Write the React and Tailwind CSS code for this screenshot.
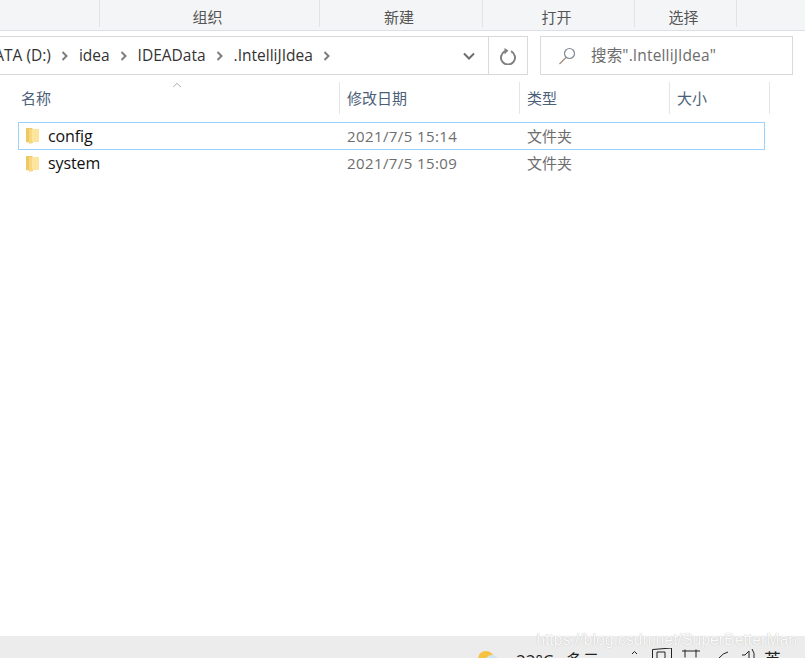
import { ChevronUp } from 'lucide-react';

const font = { fontFamily: '"Open Sans", "Noto Sans CJK SC", sans-serif' };

const tabs = [
  { label: '组织', width: 'w-[220px]' },
  { label: '新建', width: 'w-[163px]' },
  { label: '打开', width: 'w-[152px]' },
  { label: '选择', width: 'w-[102px]' },
];

const columns = [
  { label: '名称', width: 'w-[340px]', pad: 'pl-[21px]' },
  { label: '修改日期', width: 'w-[180px]', pad: 'pl-[7px]' },
  { label: '类型', width: 'w-[150px]', pad: 'pl-[7px]' },
  { label: '大小', width: 'w-[100px]', pad: 'pl-[7px]' },
];

const files = [
  { name: 'config', date: '2021/7/5 15:14', selected: true },
  { name: 'system', date: '2021/7/5 15:09', selected: false },
];

const crumbs = ['DATA (D:)', 'idea', 'IDEAData', '.IntelliJIdea'];

const Chevron = () => (
  <svg width="8" height="12" viewBox="0 0 8 12" fill="none" stroke="#7d7d7d" strokeWidth="2" className="mx-[10px] shrink-0">
    <path d="M1.5 2l4 4-4 4" />
  </svg>
);

const FolderIcon = () => (
  <svg width="13" height="17" viewBox="0 0 13 17" className="shrink-0">
    <path d="M0 1h6l1 1v14l-7-1z" fill="#eec766" />
    <path d="M3 2h10v13H6l-3 1.500z" fill="#fde59d" />
    <path d="M3 2h3v14.500l-3-0z" fill="#f8d77f" />
  </svg>
);

const SearchIcon = () => (
  <svg width="18" height="18" viewBox="0 0 18 18" fill="none" strokeWidth="1.200" className="shrink-0">
    <circle cx="11.500" cy="6.500" r="5" stroke="#7f8a94" />
    <path d="M8 10.500l-6.500 6.500" stroke="#a08c78" />
  </svg>
);

const RefreshIcon = () => (
  <svg width="18" height="18" viewBox="0 0 18 18" fill="none" className="shrink-0">
    <path d="M6 4.200a7 7 0 1 0 6 0" stroke="#808080" strokeWidth="2" />
    <path d="M5.500 1v6.500l4-4z" fill="#808080" />
  </svg>
);

export default function App() {
  return (
    <div className="relative flex flex-col w-[805px] h-[658px] overflow-hidden bg-white" style={font}>
      {/* Ribbon tabs */}
      <div className="flex h-[31px] shrink-0 bg-[#f4f5f7] border-b border-[#dcdfe3] pl-[99px]">
        {tabs.map((tab) => (
          <div
            key={tab.label}
            className={`${tab.width} h-[27px] border-l border-[#e2e3e5] flex items-center justify-center pt-[8px] pr-[4px] text-[15px] text-[#555]`}
          >
            {tab.label}
          </div>
        ))}
        <div className="h-[27px] border-l border-[#e2e3e5]" />
      </div>

      {/* Address and search */}
      <div className="flex h-[39px] shrink-0 mt-[5px]">
        <div className="flex items-center w-[550px] ml-[-22px] shrink-0 border border-[#d9d9d9] text-[15.5px] text-[#333]">
          <div className="flex items-center flex-1 pl-[4px] whitespace-nowrap">
            {crumbs.map((crumb) => (
              <div key={crumb} className="flex items-center">
                <span>{crumb}</span>
                <Chevron />
              </div>
            ))}
          </div>
          <div className="flex items-center justify-center w-[39px] h-full">
            <svg width="12" height="8" viewBox="0 0 12 8" fill="none" stroke="#6d6d6d" strokeWidth="2">
              <path d="M1 1.500l5 5 5-5" />
            </svg>
          </div>
          <div className="flex items-center justify-center w-[39px] h-full border-l border-[#d9d9d9]">
            <RefreshIcon />
          </div>
        </div>
        <div className="flex items-center w-[253px] ml-[12px] pl-[17px] border border-[#d9d9d9] text-[15.5px] tracking-[0.15px] text-[#6d6d6d]">
          <SearchIcon />
          <span className="ml-[15px] whitespace-nowrap">搜索".IntelliJIdea"</span>
        </div>
      </div>

      {/* Column headers */}
      <div className="relative flex h-[32px] shrink-0 mt-[7px] text-[15px] text-[#4c607a]">
        <ChevronUp className="absolute left-[170px] top-[-4px] w-[14px] h-[14px] text-[#8a8a8a]" strokeWidth={1.25} />
        {columns.map((col) => (
          <div key={col.label} className={`${col.width} ${col.pad} flex items-center border-r border-[#e5e5e5] shrink-0`}>
            {col.label}
          </div>
        ))}
      </div>

      {/* File list */}
      <div className="flex flex-col mt-[8px] ml-[18px] w-[747px]">
        {files.map((file) => (
          <div
            key={file.name}
            className={`flex items-center h-[27.5px] border ${file.selected ? 'border-[#99d1ff]' : 'border-transparent'}`}
          >
            <div className="flex items-center w-[320px] pl-[7px]">
              <FolderIcon />
              <span className="ml-[9px] text-[16px] tracking-[-0.1px] text-[#111]">{file.name}</span>
            </div>
            <div className="w-[180px] pl-[8px] text-[15px] tracking-[0.4px] text-[#6d6d6d]">{file.date}</div>
            <div className="pl-[8px] text-[15px] text-[#6d6d6d]">文件夹</div>
          </div>
        ))}
      </div>

      {/* Taskbar, cut off at the bottom edge */}
      <div className="flex items-start mt-auto h-[22px] bg-[#ececec] pl-[478px] pt-[14px] text-[17px] leading-[24px] text-[#222] whitespace-nowrap overflow-hidden">
        <svg width="24" height="24" viewBox="0 0 24 24" className="shrink-0 mt-[1px]">
          <circle cx="8" cy="8" r="8" fill="#f6c242" />
          <circle cx="14" cy="11" r="7" fill="#cfe6f5" />
          <circle cx="13" cy="11" r="4" fill="#9fd0ef" />
        </svg>
        <div className="flex w-[90px] ml-[14px] shrink-0 mt-[-1px]">
          <span>22°C</span>
          <span className="ml-[12px]">多云</span>
        </div>
        <svg width="130" height="10" viewBox="0 0 130 10" fill="none" stroke="#222" className="shrink-0 ml-[26px] mt-[-2px]">
          <path d="M0 6l2.500-2.500 2.500 2.500" />
          <path d="M20.500 10V1.500l19-1.500V10" />
          <path d="M25 10V4h8v6" />
          <path d="M50 3h18M53 1.500v8M64 1.500v8" />
          <path d="M87 10q4-5 9-6" />
          <path d="M110 7h3l4-4v7M120 1q3 4 2 9" />
        </svg>
        <span className="ml-[2px] mt-[-2px]">英</span>
      </div>

      {/* CSDN watermark */}
      <div className="absolute right-[8px] bottom-[8px] text-[15.800px] leading-[20px] text-white/95 [text-shadow:0_0_1px_#b0b0b0] font-['Liberation_Sans',sans-serif]">
        https://blog.csdn.net/SuperBetterMan
      </div>
    </div>
  );
}
